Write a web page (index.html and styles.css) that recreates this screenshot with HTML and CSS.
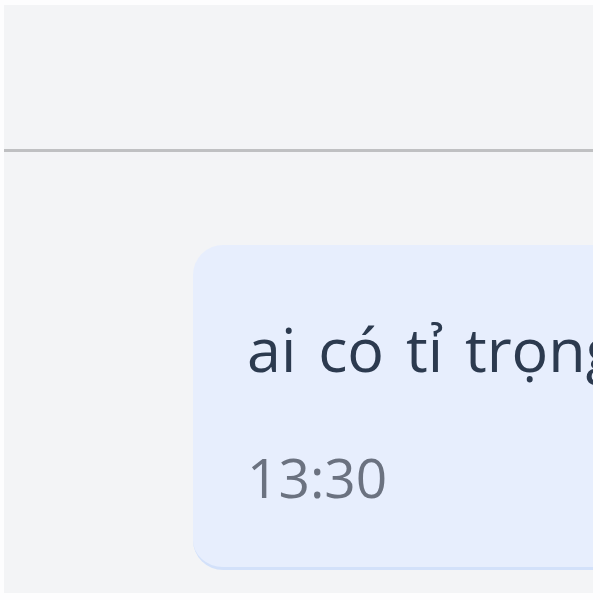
FILE: index.html
```html
<!DOCTYPE html>
<html lang="vi">
<head>
    <meta charset="UTF-8">
    <meta name="viewport" content="width=device-width, initial-scale=1.0">
    <title>Chat</title>
    <link rel="stylesheet" href="styles.css">
</head>
<body>

    <div class="app">
        <header class="chat-header"></header>

        <!-- Messages -->
        <div class="chat-body">
            <div class="message">
                <p class="message-text">ai có tỉ trọng bao nhiêu</p>
                <span class="message-time">13:30</span>
            </div>
        </div>
    </div>

</body>
</html>
```

FILE: styles.css
```css
body {
    margin: 0;
    padding: 0;
    background: #fdfdfe;
    font-family: 'Open Sans', 'Noto Sans', sans-serif;
}

.app {
    margin: 5px 7px 0 4px;
    height: 588px;
    background: #f3f4f6;
    overflow: hidden;
}

.chat-header {
    height: 144px;
    border-bottom: 3px solid #bfc0c2;
}

.chat-body {
    padding: 93px 0 0 189px;
}

.message {
    width: 520px;
    box-sizing: border-box;
    padding: 62px 0 52px 54px;
    background: #e7eefd;
    border-radius: 30px;
    border-bottom: 3px solid #d3e1fa;
}

.message-text {
    margin: 0;
    font-size: 61px;
    line-height: 84px;
    word-spacing: 6px;
    color: #2c3a4f;
    white-space: nowrap;
}

.message-time {
    display: block;
    margin-top: 47px;
    font-size: 55px;
    line-height: 77px;
    color: #6b7280;
}
```
